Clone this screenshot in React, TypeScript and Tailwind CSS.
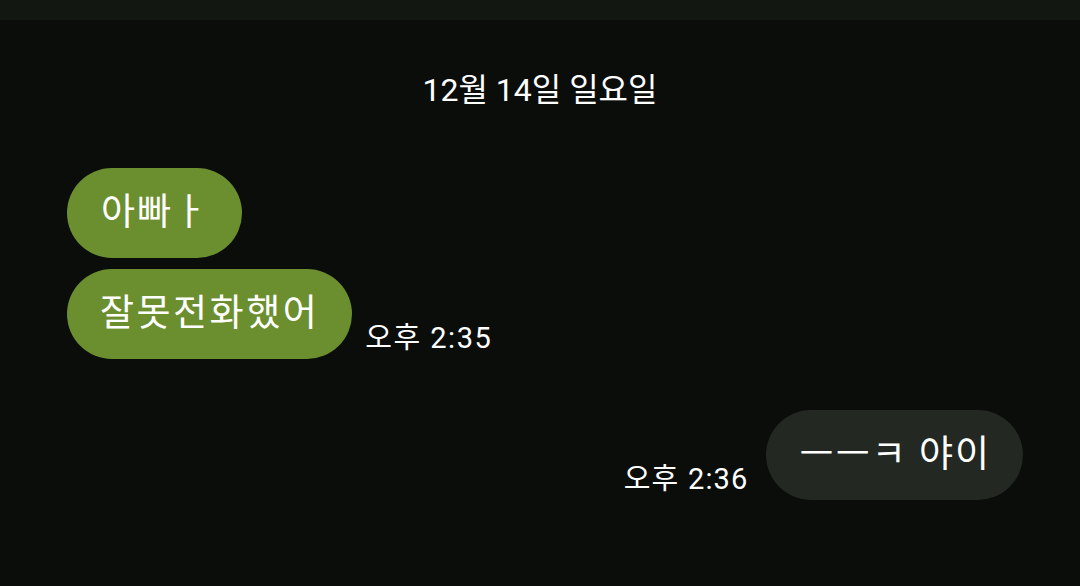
import React from "react";

const font = { fontFamily: '"Roboto", "Noto Sans CJK KR", sans-serif' };

export default function App() {
  return (
    <div className="w-[1080px] h-[586px] bg-[#0b0d0b] overflow-hidden text-white" style={font}>
      <div className="h-[20px] bg-[#121712]" />
      <div className="flex justify-center pt-[50px] h-[148px]">
        <span className="text-[32px] leading-[40px] tracking-[0px]">12월 14일 일요일</span>
      </div>
      <div className="flex flex-col gap-[11px] pl-[67px]">
        <div className="flex">
          <div className="h-[90px] rounded-full bg-[#6b8f2f] pl-[34px] pr-[33px] flex items-center text-[37px] tracking-[2px]">아빠ㅏ</div>
        </div>
        <div className="flex items-end gap-[13px]">
          <div className="h-[90px] rounded-full bg-[#6b8f2f] pl-[33px] pr-[33px] flex items-center text-[37px] tracking-[2.5px]">잘못전화했어</div>
          <span className="text-[29px] leading-[28px] mb-[7px] tracking-[1.5px]">오후 2:35</span>
        </div>
      </div>
      <div className="flex justify-end items-end gap-[17px] pr-[57px] mt-[51px]">
        <span className="text-[29px] leading-[28px] mb-[7px] tracking-[1.2px]">오후 2:36</span>
        <div className="h-[90px] rounded-full bg-[#232823] pl-[34px] pr-[32px] flex items-center text-[37px] tracking-[2px]">ㅡㅡㅋ 야이</div>
      </div>
    </div>
  );
}
